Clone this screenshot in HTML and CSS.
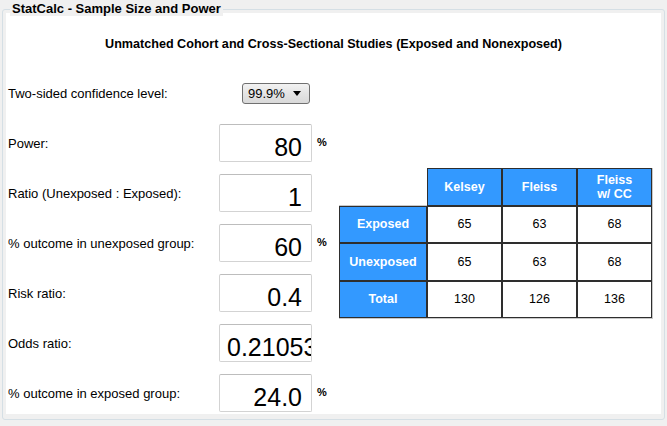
FILE: index.html
```html
<!DOCTYPE html>
<html>
<head>
<meta charset="utf-8">
<link rel="stylesheet" href="styles.css">
</head>
<body>
<div class="group">
  <span class="group-title">StatCalc - Sample Size and Power</span>
  <div class="panel">
    <h1 class="heading">Unmatched Cohort and Cross-Sectional Studies (Exposed and Nonexposed)</h1>
    <div class="body">
      <div class="form">
        <div class="label">Two-sided confidence level:</div>
        <div class="control">
          <div class="select"><span>99.9%</span><span class="arrow"></span></div>
        </div>
        <div class="unit"></div>

        <div class="label">Power:</div>
        <div class="control"><div class="box">80</div></div>
        <div class="unit">%</div>

        <div class="label">Ratio (Unexposed : Exposed):</div>
        <div class="control"><div class="box">1</div></div>
        <div class="unit"></div>

        <div class="label">% outcome in unexposed group:</div>
        <div class="control"><div class="box">60</div></div>
        <div class="unit">%</div>

        <div class="label">Risk ratio:</div>
        <div class="control"><div class="box">0.4</div></div>
        <div class="unit"></div>

        <div class="label">Odds ratio:</div>
        <div class="control"><div class="box box-left">0.21053</div></div>
        <div class="unit"></div>

        <div class="label">% outcome in exposed group:</div>
        <div class="control"><div class="box">24.0</div></div>
        <div class="unit">%</div>
      </div>
      <div class="results">
        <div class="table">
          <div class="corner"></div>
          <div class="cell head">Kelsey</div>
          <div class="cell head">Fleiss</div>
          <div class="cell head">Fleiss<br>w/ CC</div>

          <div class="cell head">Exposed</div>
          <div class="cell">65</div>
          <div class="cell">63</div>
          <div class="cell">68</div>

          <div class="cell head">Unexposed</div>
          <div class="cell">65</div>
          <div class="cell">63</div>
          <div class="cell">68</div>

          <div class="cell head">Total</div>
          <div class="cell">130</div>
          <div class="cell">126</div>
          <div class="cell">136</div>
        </div>
      </div>
    </div>
  </div>
</div>
</body>
</html>
```

FILE: styles.css
```css
html, body {
  margin: 0;
  padding: 0;
}
body {
  background: #f0f0f0;
  font-family: "Liberation Sans", Arial, sans-serif;
  font-size: 13px;
  color: #000;
  width: 667px;
  height: 426px;
  overflow: hidden;
}
.group {
  position: relative;
  margin: 9px 0 0 2px;
  width: 663px;
  height: 411px;
  box-sizing: border-box;
  border: 1px solid #d5dfe5;
  border-radius: 3px;
  padding: 3px;
}
.group-title {
  position: absolute;
  left: 7px;
  top: -9px;
  padding: 0 2px;
  background: #f0f0f0;
  font-weight: bold;
  font-size: 13px;
  line-height: 15px;
  color: #000;
}
.panel {
  background: #fff;
  height: 401px;
  overflow: hidden;
  padding: 0 2px;
}
.heading {
  margin: 0;
  padding-top: 24px;
  height: 31px;
  font-size: 12.6px;
  line-height: 14px;
  font-weight: bold;
  text-align: center;
}
.body {
  display: flex;
}
.form {
  display: grid;
  grid-template-columns: 211px 93px 20px;
  grid-auto-rows: 50px;
  align-items: center;
}
.label {
  font-size: 13px;
}
.control {
  display: flex;
  align-items: center;
}
.unit {
  align-self: start;
  margin-top: 18px;
  padding-left: 5px;
  font-weight: bold;
  font-size: 11px;
}
.select {
  margin-left: 23px;
  width: 68px;
  height: 21px;
  box-sizing: border-box;
  border: 1px solid #707070;
  border-radius: 3px;
  background: linear-gradient(#f2f2f2, #e4e4e4 50%, #d9d9d9);
  display: flex;
  align-items: center;
  justify-content: space-between;
  padding: 0 8px 0 5px;
  font-size: 13px;
}
.arrow {
  width: 0;
  height: 0;
  border-left: 4px solid transparent;
  border-right: 4px solid transparent;
  border-top: 5px solid #000;
  margin-top: 1px;
}
.box {
  width: 93px;
  height: 38px;
  box-sizing: border-box;
  border: 1px solid #d3d3d3;
  border-top-color: #bdbdbd;
  border-radius: 2px;
  background: #fff;
  font-size: 25px;
  line-height: 29px;
  padding: 8px 9px 0 7px;
  text-align: right;
  overflow: hidden;
  white-space: nowrap;
}
.box-left {
  text-align: left;
  padding-right: 0;
}
.results {
  display: flex;
  align-items: center;
  padding-left: 7px;
  height: 350px;
}
.table {
  display: grid;
  grid-template-columns: 88px 75px 75px 75px;
  grid-template-rows: 38px 37px 38px 37px;
  border-right: 1px solid #c8c8c8;
  border-bottom: 1px solid #c8c8c8;
}
.corner {
  border-bottom: 1px solid #c8c8c8;
}
.cell {
  display: flex;
  align-items: center;
  justify-content: center;
  text-align: center;
  border: 1px solid #2e2e2e;
  background: #fff;
  font-size: 12.5px;
  line-height: 14px;
}
.head {
  background: #3399ff;
  color: #fff;
  font-weight: bold;
}
```
